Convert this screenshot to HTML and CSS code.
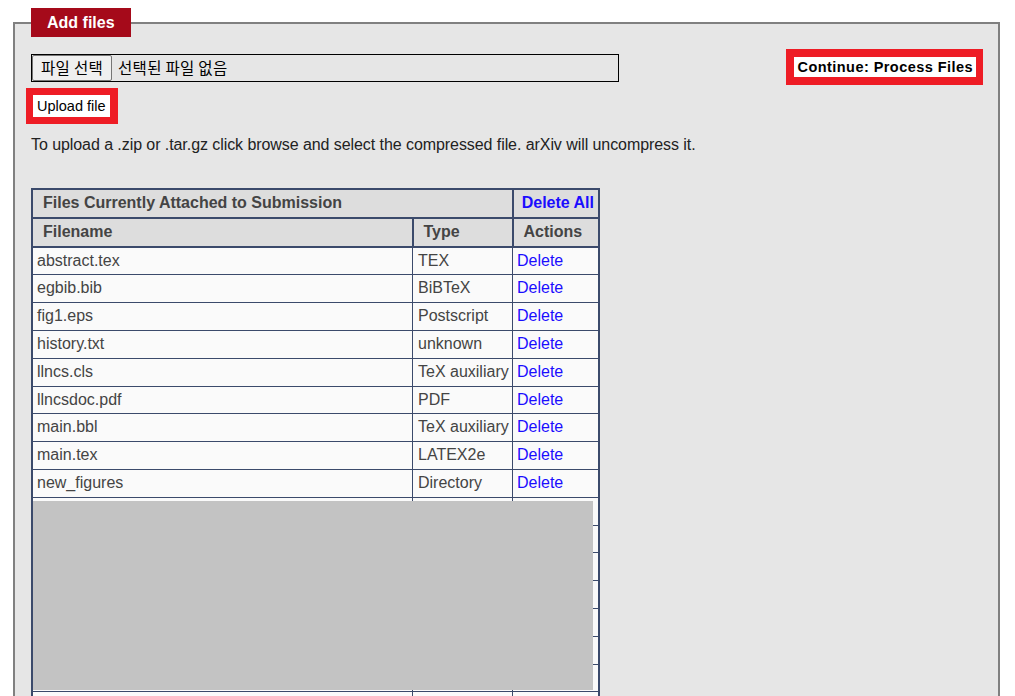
FILE: index.html
```html
<!DOCTYPE html>
<html lang="en">
<head>
<meta charset="utf-8">
<title>Add files</title>
<link rel="stylesheet" href="styles.css">
</head>
<body>
<fieldset class="panel">
  <legend class="panel-title">Add files</legend>
  <div class="top-row">
    <div class="file-input">
      <span class="file-btn">파일 선택</span>
      <span class="file-status">선택된 파일 없음</span>
    </div>
    <div class="highlight continue"><span class="btn-inner bold">Continue: Process Files</span></div>
  </div>
  <div class="highlight upload"><span class="btn-inner">Upload file</span></div>
  <p class="hint">To upload a .zip or .tar.gz click browse and select the compressed file. arXiv will uncompress it.</p>

  <div class="table-wrap">
    <table class="files">
      <thead>
        <tr class="caption-row">
          <th colspan="2" class="cap">Files Currently Attached to Submission</th>
          <th class="delall"><a href="#">Delete All</a></th>
        </tr>
        <tr class="head-row">
          <th class="c-name">Filename</th>
          <th class="c-type">Type</th>
          <th class="c-act">Actions</th>
        </tr>
      </thead>
      <tbody>
        <tr><td>abstract.tex</td><td>TEX</td><td><a href="#">Delete</a></td></tr>
        <tr><td>egbib.bib</td><td>BiBTeX</td><td><a href="#">Delete</a></td></tr>
        <tr><td>fig1.eps</td><td>Postscript</td><td><a href="#">Delete</a></td></tr>
        <tr><td>history.txt</td><td>unknown</td><td><a href="#">Delete</a></td></tr>
        <tr><td>llncs.cls</td><td>TeX auxiliary</td><td><a href="#">Delete</a></td></tr>
        <tr><td>llncsdoc.pdf</td><td>PDF</td><td><a href="#">Delete</a></td></tr>
        <tr><td>main.bbl</td><td>TeX auxiliary</td><td><a href="#">Delete</a></td></tr>
        <tr><td>main.tex</td><td>LATEX2e</td><td><a href="#">Delete</a></td></tr>
        <tr><td>new_figures</td><td>Directory</td><td><a href="#">Delete</a></td></tr>
        <tr><td>&nbsp;</td><td>&nbsp;</td><td>&nbsp;</td></tr>
        <tr><td>&nbsp;</td><td>&nbsp;</td><td>&nbsp;</td></tr>
        <tr><td>&nbsp;</td><td>&nbsp;</td><td>&nbsp;</td></tr>
        <tr><td>&nbsp;</td><td>&nbsp;</td><td>&nbsp;</td></tr>
        <tr><td>&nbsp;</td><td>&nbsp;</td><td>&nbsp;</td></tr>
        <tr><td>&nbsp;</td><td>&nbsp;</td><td>&nbsp;</td></tr>
        <tr><td>&nbsp;</td><td>&nbsp;</td><td>&nbsp;</td></tr>
        <tr><td>&nbsp;</td><td>&nbsp;</td><td>&nbsp;</td></tr>
      </tbody>
    </table>
    <div class="redact"></div>
  </div>
</fieldset>
</body>
</html>
```

FILE: styles.css
```css
html, body {
  margin: 0;
  padding: 0;
  background: #ffffff;
  font-family: "Liberation Sans", Arial, sans-serif;
  color: #222222;
}

.panel {
  margin: 8px 15px 0 13px;
  padding: 14px 15px 20px 16px;
  border: 2px solid #808080;
  background: #e6e6e6;
  min-width: 0;
}

.panel-title {
  background: #a50a1a;
  color: #ffffff;
  font-weight: bold;
  font-size: 16px;
  line-height: 29px;
  padding: 0 16px;
  margin-left: 0;
}

.top-row {
  display: flex;
  justify-content: space-between;
  align-items: flex-start;
}

.file-input {
  display: flex;
  align-items: center;
  width: 586px;
  height: 26px;
  border: 1px solid #000000;
  font-family: "Noto Sans CJK KR", "Liberation Sans", sans-serif;
  font-size: 15.5px;
  color: #000000;
  margin-top: 3px;
}

.file-btn {
  display: flex;
  align-items: center;
  height: 26px;
  padding: 0 8px;
  margin-left: 0;
  background: #efefef;
  border: 1px solid #767676;
  border-radius: 2px;
  box-sizing: border-box;
  line-height: 1;
  letter-spacing: 0.3px;
}

.file-status {
  margin-left: 6px;
  line-height: 1;
  letter-spacing: 0.3px;
}

.highlight {
  border: solid #ee1c25;
  background: #ffffff;
  color: #000000;
}

.btn-inner {
  display: block;
}

.bold {
  font-weight: bold;
}

.continue {
  font-size: 14.5px;
  letter-spacing: 0.45px;
  border-width: 8px 7px 8px 8px;
  padding: 2px 3px 2px 3px;
  line-height: 16px;
  margin-top: -2px;
}

.upload {
  width: fit-content;
  font-size: 14.5px;
  border-width: 7px 8px 7px 7px;
  padding: 3px 4px;
  line-height: 16px;
  margin: 3px 0 0 -5px;
}

.hint {
  margin: 11px 0 0 0;
  font-size: 16px;
  line-height: 20px;
  letter-spacing: -0.07px;
  color: #222222;
}

.table-wrap {
  position: relative;
  margin-top: 33px;
  width: 569px;
}

.files {
  width: 569px;
  border-collapse: collapse;
  border: 2px solid #3b4a6b;
  font-size: 16px;
}

.files th {
  background: #dddddd;
  color: #444444;
  font-weight: bold;
  text-align: left;
  border: 2px solid #3b4a6b;
  padding: 4px 0 4px 10px;
  line-height: 18.8px;
}

.files th.delall {
  text-align: right;
  padding: 4px 4px 4px 0;
}

.files th.c-act {
  padding-left: 10px;
}

.files th a {
  color: #1a0dff;
  text-decoration: none;
}

.files td {
  background: #fafafa;
  color: #444444;
  border: 1px solid #3b4a6b;
  padding: 4px 0 4px 4px;
  line-height: 18.8px;
  white-space: nowrap;
}

.files td:first-child {
  width: 375px;
}

.files td:nth-child(2) {
  width: 94px;
  padding-left: 5px;
}

.files td a {
  color: #1a0dff;
  text-decoration: none;
}

.redact {
  position: absolute;
  left: 2px;
  top: 313px;
  width: 560px;
  height: 189px;
  background: #c3c3c3;
}
```
